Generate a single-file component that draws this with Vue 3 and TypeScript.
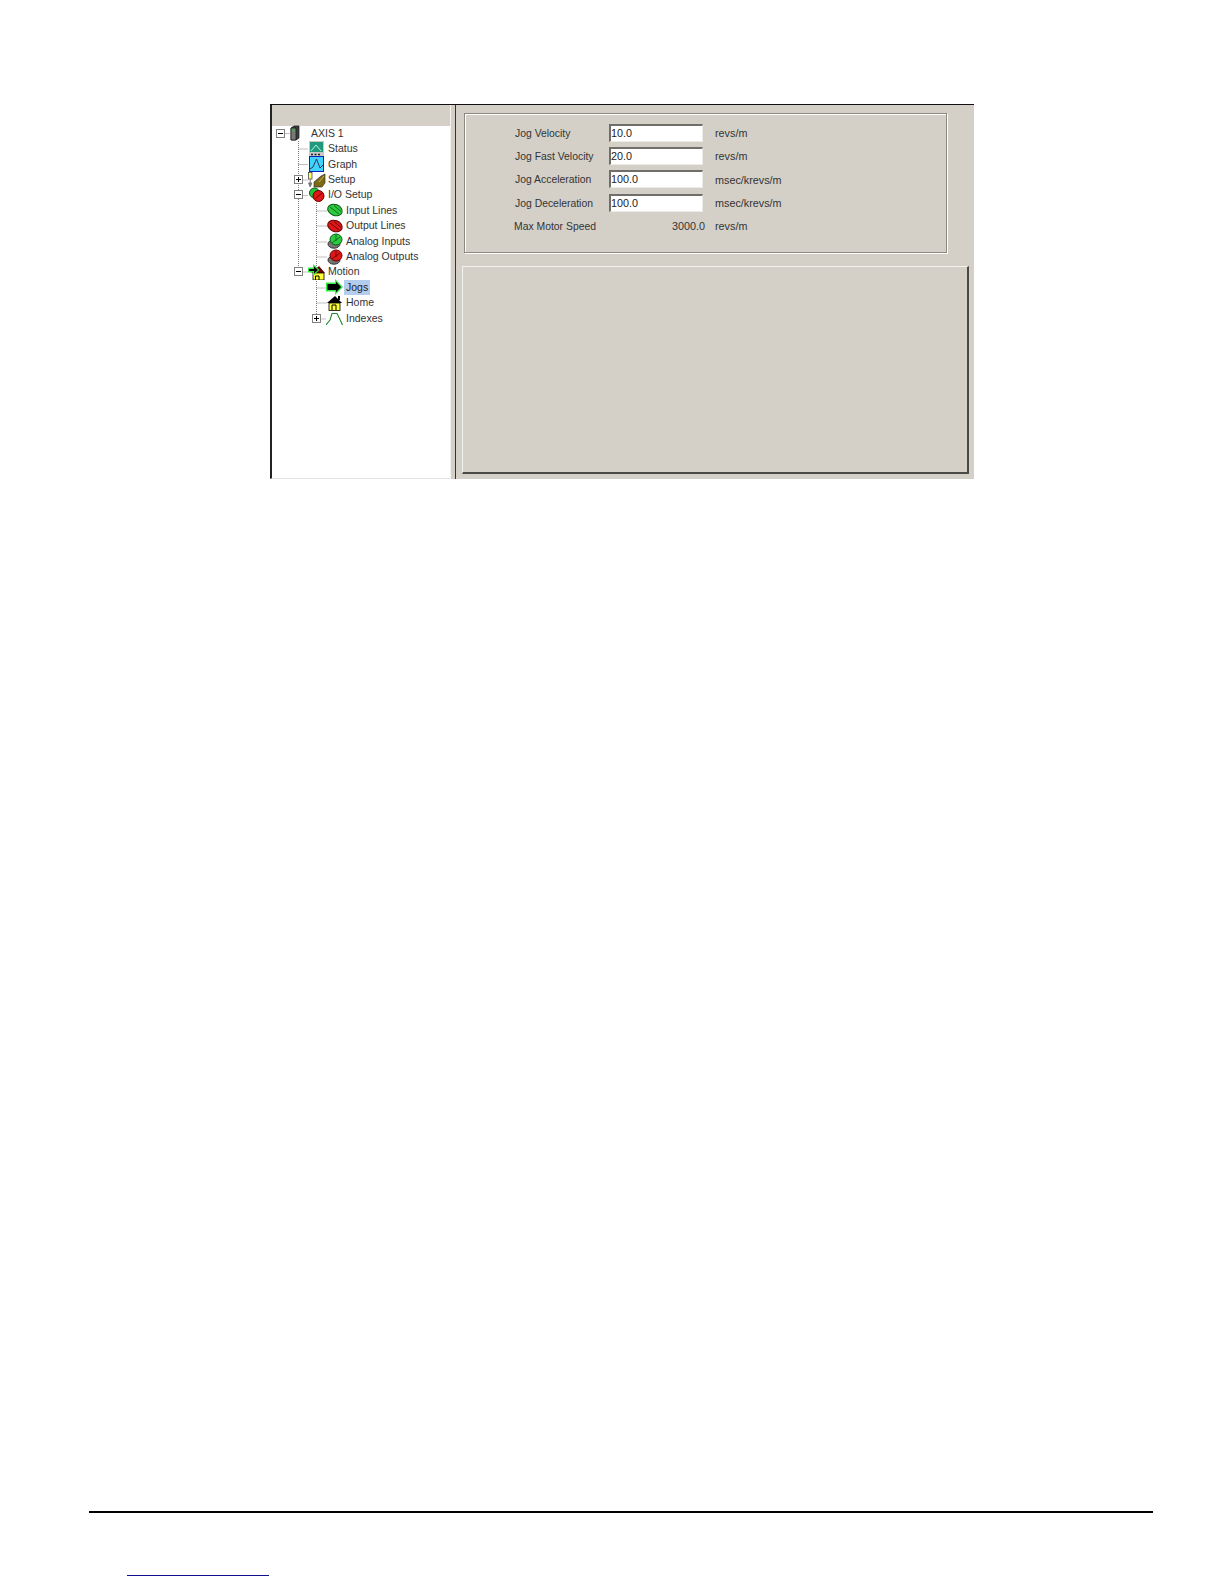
<script setup lang="ts">
interface Node { label: string; level: number; icon: string; exp?: '+' | '-'; sel?: boolean }
const nodes: Node[] = [
  { label: 'AXIS 1', level: 0, icon: 'drive', exp: '-' },
  { label: 'Status', level: 1, icon: 'status' },
  { label: 'Graph', level: 1, icon: 'graph' },
  { label: 'Setup', level: 1, icon: 'setup', exp: '+' },
  { label: 'I/O Setup', level: 1, icon: 'io', exp: '-' },
  { label: 'Input Lines', level: 2, icon: 'in' },
  { label: 'Output Lines', level: 2, icon: 'out' },
  { label: 'Analog Inputs', level: 2, icon: 'ain' },
  { label: 'Analog Outputs', level: 2, icon: 'aout' },
  { label: 'Motion', level: 1, icon: 'motion', exp: '-' },
  { label: 'Jogs', level: 2, icon: 'jog', sel: true },
  { label: 'Home', level: 2, icon: 'home' },
  { label: 'Indexes', level: 2, icon: 'index', exp: '+' },
]
const fields = [
  { label: 'Jog Velocity', value: '10.0', unit: 'revs/m' },
  { label: 'Jog Fast Velocity', value: '20.0', unit: 'revs/m' },
  { label: 'Jog Acceleration', value: '100.0', unit: 'msec/krevs/m' },
  { label: 'Jog Deceleration', value: '100.0', unit: 'msec/krevs/m' },
]
</script>

<template>
  <div class="page">
    <div class="shot">
      <aside class="tree-pane">
        <div class="tree-head"></div>
        <div class="tree">
          <svg class="wires" width="178" height="210" viewBox="0 0 178 210">
            <g stroke="#808080" stroke-width="1" stroke-dasharray="1 1" fill="none">
              <path d="M9.5 7.5H19" />
              <path d="M27.5 15V146M27.5 23H37M27.5 38.5H37M27.5 54H37M27.5 69.5H37M27.5 146H37" />
              <path d="M45.5 77V193M45.5 85H56M45.5 100H56M45.5 116H56M45.5 131H56M45.5 162H56M45.5 177H56M45.5 193H55" />
            </g>
          </svg>
          <div v-for="n in nodes" :key="n.label" class="row" :class="'lv' + n.level">
            <span class="exp-slot">
              <span v-if="n.exp" class="exp">
                <svg width="9" height="9" viewBox="0 0 9 9">
                  <rect x=".5" y=".5" width="8" height="8" fill="#fff" stroke="#808080" />
                  <path d="M2 4.5H7" stroke="#000" />
                  <path v-if="n.exp === '+'" d="M4.5 2V7" stroke="#000" />
                </svg>
              </span>
            </span>
            <svg class="ico" width="18" height="16" viewBox="0 0 18 16">
              <g v-if="n.icon === 'drive'">
                <path d="M5 3 8 1h5v12l-3 2H5z" fill="#3a3f3b" stroke="#111" stroke-width=".7" />
                <path d="M5 3h5v12H5z" fill="#777b76" stroke="#111" stroke-width=".7" />
                <rect x="6.5" y="4" width="2" height="2" fill="#27c43c" />
              </g>
              <g v-else-if="n.icon === 'status'">
                <rect x="1" y="0" width="15" height="16" fill="#c8c8c4" />
                <rect x="2" y="1" width="13" height="10" fill="#1f9a7e" />
                <path d="M3 10 8 4l5 6" stroke="#b6f0dd" fill="none" />
                <path d="M3 13.5h2M6.5 13.5h2M10 13.5h2" stroke="#222" stroke-width="1.6" />
              </g>
              <g v-else-if="n.icon === 'graph'">
                <rect x="1.5" y="0.5" width="14" height="15" fill="#3fd3ff" stroke="#1020c0" />
                <path d="M2 13 5 11 8.5 3 12 12 15 9" stroke="#335" fill="none" />
              </g>
              <g v-else-if="n.icon === 'setup'">
                <rect x="0.5" y="0.5" width="3.5" height="6.5" fill="#ffff66" stroke="#333" stroke-width=".7" />
                <path d="M2.2 7v6M.6 11l1.6 4 1.6-4z" fill="#777" stroke="#777" />
                <path d="M6 15V10l7-6 4-2v9l-3 4z" fill="#7d6a14" stroke="#222" stroke-width=".6" />
                <path d="M11 10l5-6" stroke="#c9b95a" />
              </g>
              <g v-else-if="n.icon === 'io'">
                <ellipse cx="6.5" cy="6" rx="5" ry="5" fill="#24c53a" stroke="#0b5a16" />
                <ellipse cx="10.5" cy="9" rx="5.5" ry="5.5" fill="#e01616" stroke="#600" />
                <path d="M7 12 14 6" stroke="#700" />
              </g>
              <g v-else-if="n.icon === 'in' || n.icon === 'out'">
                <ellipse cx="9" cy="8" rx="7.5" ry="5.5" transform="rotate(20 9 8)"
                  :fill="n.icon === 'in' ? '#2ccb3f' : '#dc1818'"
                  :stroke="n.icon === 'in' ? '#0b5a16' : '#600'" />
                <path d="M4 5l9 7M8 3.5l7 6" :stroke="n.icon === 'in' ? '#0b6a1a' : '#700'" />
              </g>
              <g v-else-if="n.icon === 'ain' || n.icon === 'aout'">
                <ellipse cx="8" cy="11" rx="6" ry="4.2" fill="#777" stroke="#333" />
                <ellipse cx="10" cy="6.5" rx="6" ry="5.5" :fill="n.icon === 'ain' ? '#2ccb3f' : '#dc1818'"
                  :stroke="n.icon === 'ain' ? '#0b5a16' : '#600'" />
                <path d="M10 2v6M6 10l8-6" :stroke="n.icon === 'ain' ? '#0b5a16' : '#600'" stroke-width=".8" />
              </g>
              <g v-else-if="n.icon === 'jog'">
                <path d="M0 3.5H9V0l8 8-8 8v-3.5H0z" fill="#33ee44" />
                <path d="M1.5 5H10V2.8L15 8l-5 5.2V11H1.5z" fill="#000" />
              </g>
              <g v-else-if="n.icon === 'home'">
                <path d="M1 8 9 1l7 7z" fill="#000" />
                <rect x="12" y="1" width="2" height="4" fill="#000" />
                <rect x="3" y="8" width="11" height="7.5" fill="#ffff33" stroke="#000" stroke-width=".8" />
                <path d="M6 15V10h4v5" fill="none" stroke="#000" />
              </g>
              <g v-else-if="n.icon === 'motion'">
                <path d="M3 9 11 2l6 7z" fill="#600" />
                <rect x="5" y="9" width="11" height="7" fill="#ffff33" stroke="#000" stroke-width=".8" />
                <path d="M7.5 16v-4h3.5v4" fill="none" stroke="#000" />
                <path d="M0 3.5H5V0l6.5 6L5 12V8.5H0z" fill="#33ee44" />
                <path d="M1 5H6V2.5L10 6 6 9.5V7H1z" fill="#000" />
              </g>
              <g v-else>
                <path d="M0 15 4 10 6 3.5h5l2.5 5 3 6.5" fill="none" stroke="#1f8a32" stroke-width="1.1" />
              </g>
            </svg>
            <span class="lab" :class="{ sel: n.sel }">{{ n.label }}</span>
          </div>
        </div>
      </aside>
      <div class="split"></div>
      <main class="main">
        <section class="group">
          <div class="form">
            <template v-for="f in fields" :key="f.label">
              <label class="f-label">{{ f.label }}</label>
              <div class="input">{{ f.value }}</div>
              <span class="f-unit">{{ f.unit }}</span>
            </template>
            <label class="f-label max">Max Motor Speed</label>
            <div class="readout">3000.0</div>
            <span class="f-unit">revs/m</span>
          </div>
        </section>
        <section class="lower"></section>
      </main>
    </div>
    <footer class="foot">
      <div class="rule"></div>
      <div class="link"></div>
    </footer>
  </div>
</template>

<style>
body { margin: 0; background: #fff; }
</style>

<style scoped>
.page {
  width: 1224px;
  height: 1584px;
  background: #fff;
  padding-top: 104px;
  box-sizing: border-box;
  font-family: "Liberation Sans", Arial, sans-serif;
  font-size: 10.8px;
  color: #333;
}
.shot {
  display: flex;
  width: 704px;
  height: 374px;
  margin-left: 270px;
  background: #d4d0c8;
  border-top: 1px solid #111;
}
.tree-pane {
  width: 180px;
  background: #fff;
  border-left: 2px solid #222;
  border-bottom: 1px solid #e4e4e0;
  box-sizing: border-box;
  display: flex;
  flex-direction: column;
}
.tree-head { height: 20.7px; background: #d4d0c8; flex: none; }
.tree { position: relative; flex: 1; }
.wires { position: absolute; left: -1px; top: 0; }
.row {
  position: relative;
  height: 15.4px;
  display: flex;
  align-items: center;
  white-space: nowrap;
  font-size: 10.5px;
}
.lv0 { padding-left: 4px; }
.lv1 { padding-left: 22px; }
.lv2 { padding-left: 40px; }
.exp-slot { width: 14px; height: 9px; flex: none; }
.lv0 .exp-slot { width: 10px; }
.exp { display: block; width: 9px; height: 9px; }
.exp svg { display: block; }
.ico { flex: none; }
.lv0 .ico { margin-right: 5px; }
.lab { padding: 1px 2px; line-height: 13px; }
.sel { background: #b3cdee; color: #222; }
.split {
  width: 5px;
  flex: none;
  background: #d4d0c8;
  border-left: 1px solid #f4f3f0;
  box-sizing: border-box;
}
.main {
  flex: 1;
  border-left: 1px solid #333;
  box-sizing: border-box;
  padding: 8px 5px 5px 6px;
  display: flex;
  flex-direction: column;
}
.group {
  width: 483px;
  height: 140px;
  margin-left: 2px;
  border: 1px solid #8c8a80;
  box-shadow: inset 1px 1px 0 #fff, 1px 1px 0 #fff;
  box-sizing: border-box;
  flex: none;
}
.form {
  display: grid;
  grid-template-columns: 95px 94px auto;
  grid-auto-rows: 23.3px;
  padding: 7px 0 0 49px;
  align-items: center;
}
.f-label { white-space: nowrap; font-size: 10.4px; padding: 1px 0 0 1px; }
.max { margin-left: -1px; }
.f-unit { margin-left: 12px; white-space: nowrap; padding-top: 1px; }
.input {
  height: 18px;
  box-sizing: border-box;
  background: #fff;
  border-top: 2px solid #6f6e68;
  border-left: 2px solid #6f6e68;
  border-right: 1px solid #ecebe6;
  border-bottom: 1px solid #ecebe6;
  line-height: 14px;
  color: #222;
}
.readout { text-align: right; margin-right: -2px; }
.lower {
  flex: 1;
  margin-top: 13px;
  border-top: 1px solid #f3f2ec;
  border-left: 1px solid #f3f2ec;
  border-right: 2px solid #4a4a45;
  border-bottom: 2px solid #4a4a45;
  box-sizing: border-box;
}
.rule {
  margin: 1032px 0 0 89px;
  width: 1064px;
  height: 2px;
  background: #000;
}
.link {
  margin: 62px 0 0 127px;
  width: 142px;
  height: 1px;
  background: #101090;
}
</style>
